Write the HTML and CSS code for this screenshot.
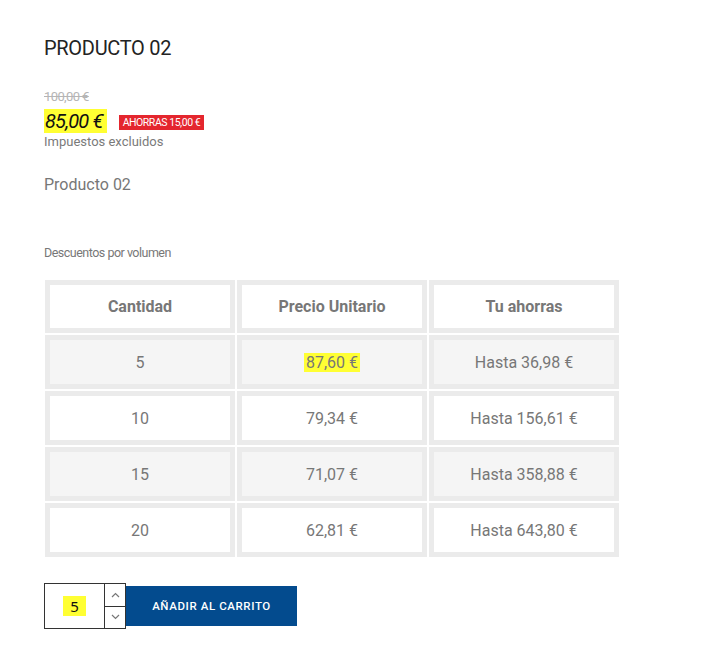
FILE: index.html
```html
<!DOCTYPE html>
<html lang="es">
<head>
<meta charset="utf-8">
<title>Producto 02</title>
<link rel="stylesheet" href="styles.css">
</head>
<body>
<div class="product">
  <h1 class="title">PRODUCTO 02</h1>
  <div class="prices">
    <div class="old-price">100,00 €</div>
    <div class="price-row">
      <span class="price"><mark>85,00 €</mark></span>
      <span class="badge">AHORRAS 15,00 €</span>
    </div>
    <div class="tax">Impuestos excluidos</div>
  </div>
  <p class="desc">Producto 02</p>
  <div class="volume-label">Descuentos por volumen</div>
  <table class="discounts">
    <thead>
      <tr><th>Cantidad</th><th>Precio Unitario</th><th>Tu ahorras</th></tr>
    </thead>
    <tbody>
      <tr class="odd"><td>5</td><td><mark>87,60 €</mark></td><td>Hasta 36,98 €</td></tr>
      <tr><td>10</td><td>79,34 €</td><td>Hasta 156,61 €</td></tr>
      <tr class="odd"><td>15</td><td>71,07 €</td><td>Hasta 358,88 €</td></tr>
      <tr><td>20</td><td>62,81 €</td><td>Hasta 643,80 €</td></tr>
    </tbody>
  </table>
  <div class="add-row">
    <div class="qty">
      <div class="qty-value"><mark>5</mark></div>
      <div class="qty-arrows">
        <span class="arrow"><svg width="9" height="6" viewBox="0 0 9 6"><path d="M1 5 L4.5 1.5 L8 5" fill="none" stroke="#777" stroke-width="1.2"/></svg></span>
        <span class="arrow"><svg width="9" height="6" viewBox="0 0 9 6"><path d="M1 1 L4.5 4.5 L8 1" fill="none" stroke="#777" stroke-width="1.2"/></svg></span>
      </div>
    </div>
    <button class="add-btn">AÑADIR AL CARRITO</button>
  </div>
</div>
</body>
</html>
```

FILE: styles.css
```css
* { box-sizing: border-box; }
body {
  margin: 0;
  background: #fff;
  font-family: Roboto, "Noto Sans", sans-serif;
  color: #7a7a7a;
}
.product {
  padding: 36px 0 0 44px;
}
.title {
  margin: 0;
  font-size: 20px;
  font-weight: 400;
  color: #232323;
  line-height: 24px;
  letter-spacing: -0.3px;
}
.prices {
  margin-top: 30px;
}
.old-price {
  font-size: 13px;
  line-height: 14px;
  color: #b5b5b5;
  text-decoration: line-through;
  letter-spacing: -0.6px;
}
.price-row {
  display: flex;
  align-items: center;
  margin-top: 7px;
  height: 20px;
}
.price {
  font-size: 20px;
  font-style: italic;
  color: #111;
  letter-spacing: -0.8px;
  line-height: 20px;
}
mark {
  background: #ffff33;
  color: inherit;
}
.price mark {
  padding: 0 4px 0 1px;
}
.badge {
  margin-left: 12px;
  background: #e4262e;
  color: #fff;
  font-size: 10.5px;
  line-height: 15px;
  height: 15px;
  padding: 0 4px;
  letter-spacing: -0.45px;
  margin-top: 2px;
}
.tax {
  font-size: 13px;
  line-height: 16px;
  margin-top: 3px;
  color: #7a7a7a;
}
.desc {
  margin: 25px 0 0 0;
  font-size: 16px;
  line-height: 20px;
  color: #777;
}
.volume-label {
  margin-top: 50px;
  font-size: 12.5px;
  line-height: 16px;
  color: #777;
  letter-spacing: -0.5px;
}
.discounts {
  margin: 17px 0 0 -1px;
  border-collapse: separate;
  border-spacing: 2px;
}
.discounts th,
.discounts td {
  width: 190px;
  height: 54px;
  border: 5px solid #ebebeb;
  text-align: center;
  font-size: 16px;
  color: #777;
  padding: 0;
  background: #fff;
}
.discounts th {
  height: 53px;
  font-weight: 700;
}
.discounts tr.odd td {
  background: #f5f5f5;
}
.discounts td mark {
  padding: 0 2px;
}
.add-row {
  display: flex;
  align-items: center;
  margin-top: 24px;
}
.qty {
  display: flex;
  height: 46px;
  border: 1px solid #333;
}
.qty-value {
  width: 60px;
  display: flex;
  align-items: center;
  justify-content: center;
  font-family: "Noto Sans", sans-serif;
  font-size: 15px;
  color: #111;
  border-right: 1px solid #333;
}
.qty-value mark {
  padding: 0 7px;
}
.qty-arrows {
  width: 20px;
  display: flex;
  flex-direction: column;
}
.arrow {
  flex: 1;
  display: flex;
  align-items: center;
  justify-content: center;
}
.arrow + .arrow {
  border-top: 1px solid #333;
}
.add-btn {
  width: 171px;
  height: 40px;
  border: 0;
  background: #034b8e;
  color: #fff;
  font-family: Roboto, sans-serif;
  font-size: 11.5px;
  font-weight: 500;
  letter-spacing: 0.6px;
  cursor: pointer;
}
```
